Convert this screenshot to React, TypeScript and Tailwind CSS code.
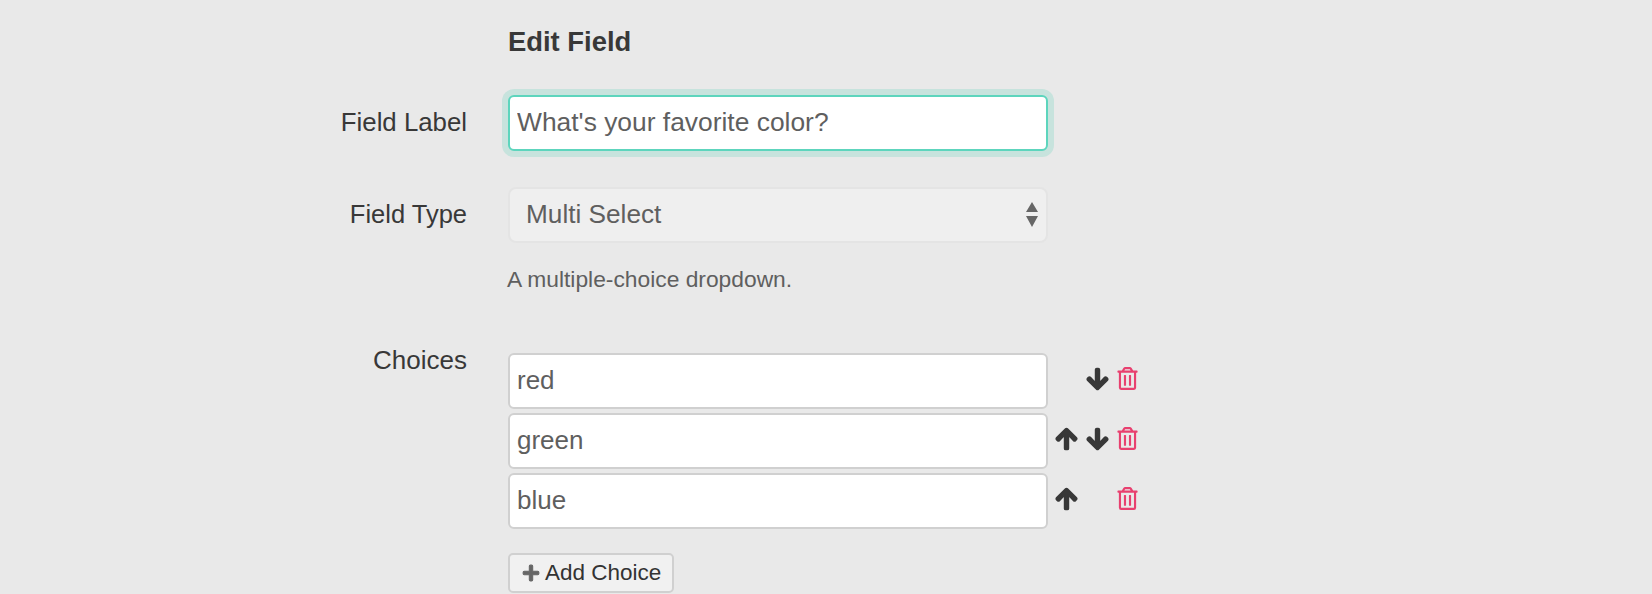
import { FaArrowUp, FaArrowDown, FaRegTrashAlt, FaPlus } from "react-icons/fa";

const inputCls =
  "block w-[540px] h-[56px] rounded-[6px] bg-white border-2 border-[#d0d0d0] pl-[7px] pr-[8px] pb-[2px] text-[26px] text-[#5f5f5f] outline-none";

function Choice({ value, up, down, mt }: { value: string; up: boolean; down: boolean; mt: string }) {
  return (
    <div className={`flex items-center ${mt}`}>
      <input readOnly value={value} className={inputCls} />
      <div className="flex items-center ml-[7px] mb-[5px] text-[#383838]">
        <span className="w-[23px] h-[23px] flex items-center justify-center">
          {up && <FaArrowUp size={24} stroke="currentColor" strokeWidth={36} strokeLinejoin="round" />}
        </span>
        <span className="w-[23px] h-[23px] ml-[8px] flex items-center justify-center">
          {down && <FaArrowDown size={24} stroke="currentColor" strokeWidth={36} strokeLinejoin="round" />}
        </span>
        <FaRegTrashAlt size={23} className="ml-[7px] text-[#e8406f]" />
      </div>
    </div>
  );
}

export default function App() {
  return (
    <div className="w-[1652px] h-[594px] overflow-hidden bg-[#e9e9e9] font-['Liberation_Sans',Arial,sans-serif] text-[#383838] pt-[26px]">
      <div className="pl-[508px] text-[27.4px] leading-[32px] font-bold text-[#383838]">Edit Field</div>
      <div className="flex items-center mt-[37px]">
        <label className="w-[467px] text-right text-[25.8px] pb-[2px]">Field Label</label>
        <input
          readOnly
          value="What's your favorite color?"
          className="ml-[41px] block w-[540px] h-[56px] rounded-[6px] bg-white border-2 border-[#5dd5bd] pl-[7px] pr-[8px] pb-[2px] text-[26.4px] text-[#5f5f5f] outline-none shadow-[0_0_0_6px_#c7e3dd]"
        />
      </div>
      <div className="flex items-center mt-[36px]">
        <label className="w-[467px] text-right text-[25.5px] pb-[2px]">Field Type</label>
        <div className="ml-[41px] relative w-[540px] h-[56px] rounded-[8px] bg-[#efefef] border-2 border-[#e4e4e4] pl-[16px] flex items-center text-[26.2px] text-[#5f5f5f]">
          Multi Select
          <svg className="absolute right-[7px] top-[13px]" width="14" height="26" viewBox="0 0 14 26">
            <path d="M7 0 L13 10 L1 10 Z M1 14 L13 14 L7 25 Z" fill="#666666" />
          </svg>
        </div>
      </div>
      <div className="pl-[507px] mt-[21px] text-[22.8px] leading-[30px] text-[#5f5f5f]">A multiple-choice dropdown.</div>
      <div className="flex mt-[59px]">
        <label className="w-[467px] text-right text-[26px] leading-[30px] mt-[-8px]">Choices</label>
        <div className="ml-[41px]">
          <Choice value="red" up={false} down={true} mt="" />
          <Choice value="green" up={true} down={true} mt="mt-[4px]" />
          <Choice value="blue" up={true} down={false} mt="mt-[4px]" />
          <button className="mt-[24px] flex items-center h-[40px] w-[166px] rounded-[5px] bg-[#f1f1f1] border-2 border-[#d0d0d0] pl-[12px] text-[22.5px] text-[#333333]">
            <FaPlus size={18} stroke="currentColor" strokeWidth={30} className="text-[#666666] mr-[5px]" />
            Add Choice
          </button>
        </div>
      </div>
    </div>
  );
}
